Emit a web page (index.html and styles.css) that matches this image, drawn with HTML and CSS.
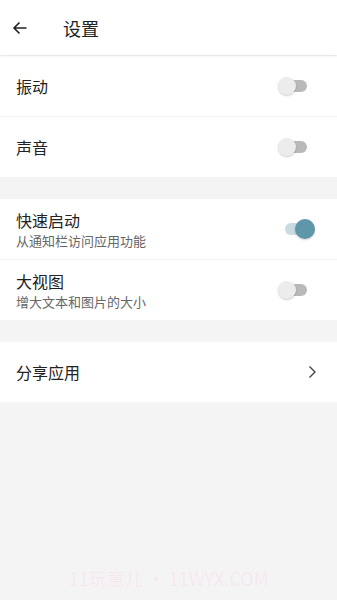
FILE: index.html
```html
<!DOCTYPE html>
<html lang="zh">
<head>
<meta charset="utf-8">
<link rel="stylesheet" href="styles.css">
</head>
<body>
<div class="app">
  <header class="bar">
    <svg class="back" width="16" height="16" viewBox="0 0 16 16"><path d="M14.5 8H2M7.5 2.5L2 8l5.5 5.5" fill="none" stroke="#222" stroke-width="1.6"/></svg>
    <span class="title">设置</span>
  </header>
  <section class="group first">
    <div class="row">
      <div class="text"><div class="label">振动</div></div>
      <span class="switch"><span class="track"></span><span class="thumb"></span></span>
    </div>
    <div class="row">
      <div class="text"><div class="label">声音</div></div>
      <span class="switch"><span class="track"></span><span class="thumb"></span></span>
    </div>
  </section>
  <section class="group">
    <div class="row">
      <div class="text"><div class="label">快速启动</div><div class="sub">从通知栏访问应用功能</div></div>
      <span class="switch on"><span class="track"></span><span class="thumb"></span></span>
    </div>
    <div class="row">
      <div class="text"><div class="label">大视图</div><div class="sub">增大文本和图片的大小</div></div>
      <span class="switch"><span class="track"></span><span class="thumb"></span></span>
    </div>
  </section>
  <section class="group">
    <div class="row">
      <div class="text"><div class="label">分享应用</div></div>
      <svg class="chev" width="10" height="14" viewBox="0 0 10 14"><path d="M2.5 1.5L8 7l-5.5 5.5" fill="none" stroke="#444" stroke-width="1.4"/></svg>
    </div>
  </section>
  <div class="watermark">11玩意儿 • 11WYX.COM</div>
</div>
</body>
</html>
```
FILE: styles.css
```css
html, body {
  margin: 0;
  padding: 0;
}
body {
  background: #f4f4f4;
  font-family: "Noto Sans CJK SC", "Noto Sans", sans-serif;
  color: #222;
}
.app {
  width: 337px;
  height: 600px;
  position: relative;
  overflow: hidden;
  background: #f4f4f4;
}
.bar {
  height: 55px;
  background: #fff;
  display: flex;
  align-items: center;
  box-shadow: 0 1px 3px rgba(0,0,0,0.08);
  position: relative;
  z-index: 1;
}
.back {
  margin-left: 12px;
  margin-right: 35px;
}
.title {
  font-size: 18px;
  color: #222;
}
.group {
  background: #fff;
  margin-top: 22px;
}
.group.first {
  margin-top: 1px;
}
.row {
  height: 60px;
  display: flex;
  align-items: center;
  padding: 0 20px 0 16px;
  border-bottom: 1px solid #f3f3f3;
}
.row:last-child {
  border-bottom: none;
}
.text {
  flex: 1;
}
.label {
  font-size: 16px;
  line-height: 22px;
  color: #222;
}
.sub {
  font-size: 13px;
  line-height: 18px;
  color: #666;
  margin-top: 1px;
}
.switch {
  position: relative;
  width: 29px;
  height: 20px;
  margin-right: 10px;
}
.track {
  position: absolute;
  left: 3px;
  right: 0;
  top: 4px;
  height: 12px;
  border-radius: 6px;
  background: #b9b9b9;
}
.thumb {
  position: absolute;
  left: 0;
  top: 1px;
  width: 18px;
  height: 18px;
  border-radius: 50%;
  background: #ececec;
  box-shadow: 0 1px 2px rgba(0,0,0,0.2);
}
.switch.on .track {
  left: 7px;
  background: #c9dbe2;
}
.switch.on .thumb {
  left: 17px;
  top: 0;
  width: 20px;
  height: 20px;
  background: #5e97a9;
}
.chev {
  margin-right: 0;
}
.watermark {
  position: absolute;
  left: 0;
  right: 0;
  top: 565px;
  text-align: center;
  font-size: 18px;
  color: rgba(255, 140, 215, 0.13);
  font-family: "Noto Sans CJK SC", sans-serif;
}
```
